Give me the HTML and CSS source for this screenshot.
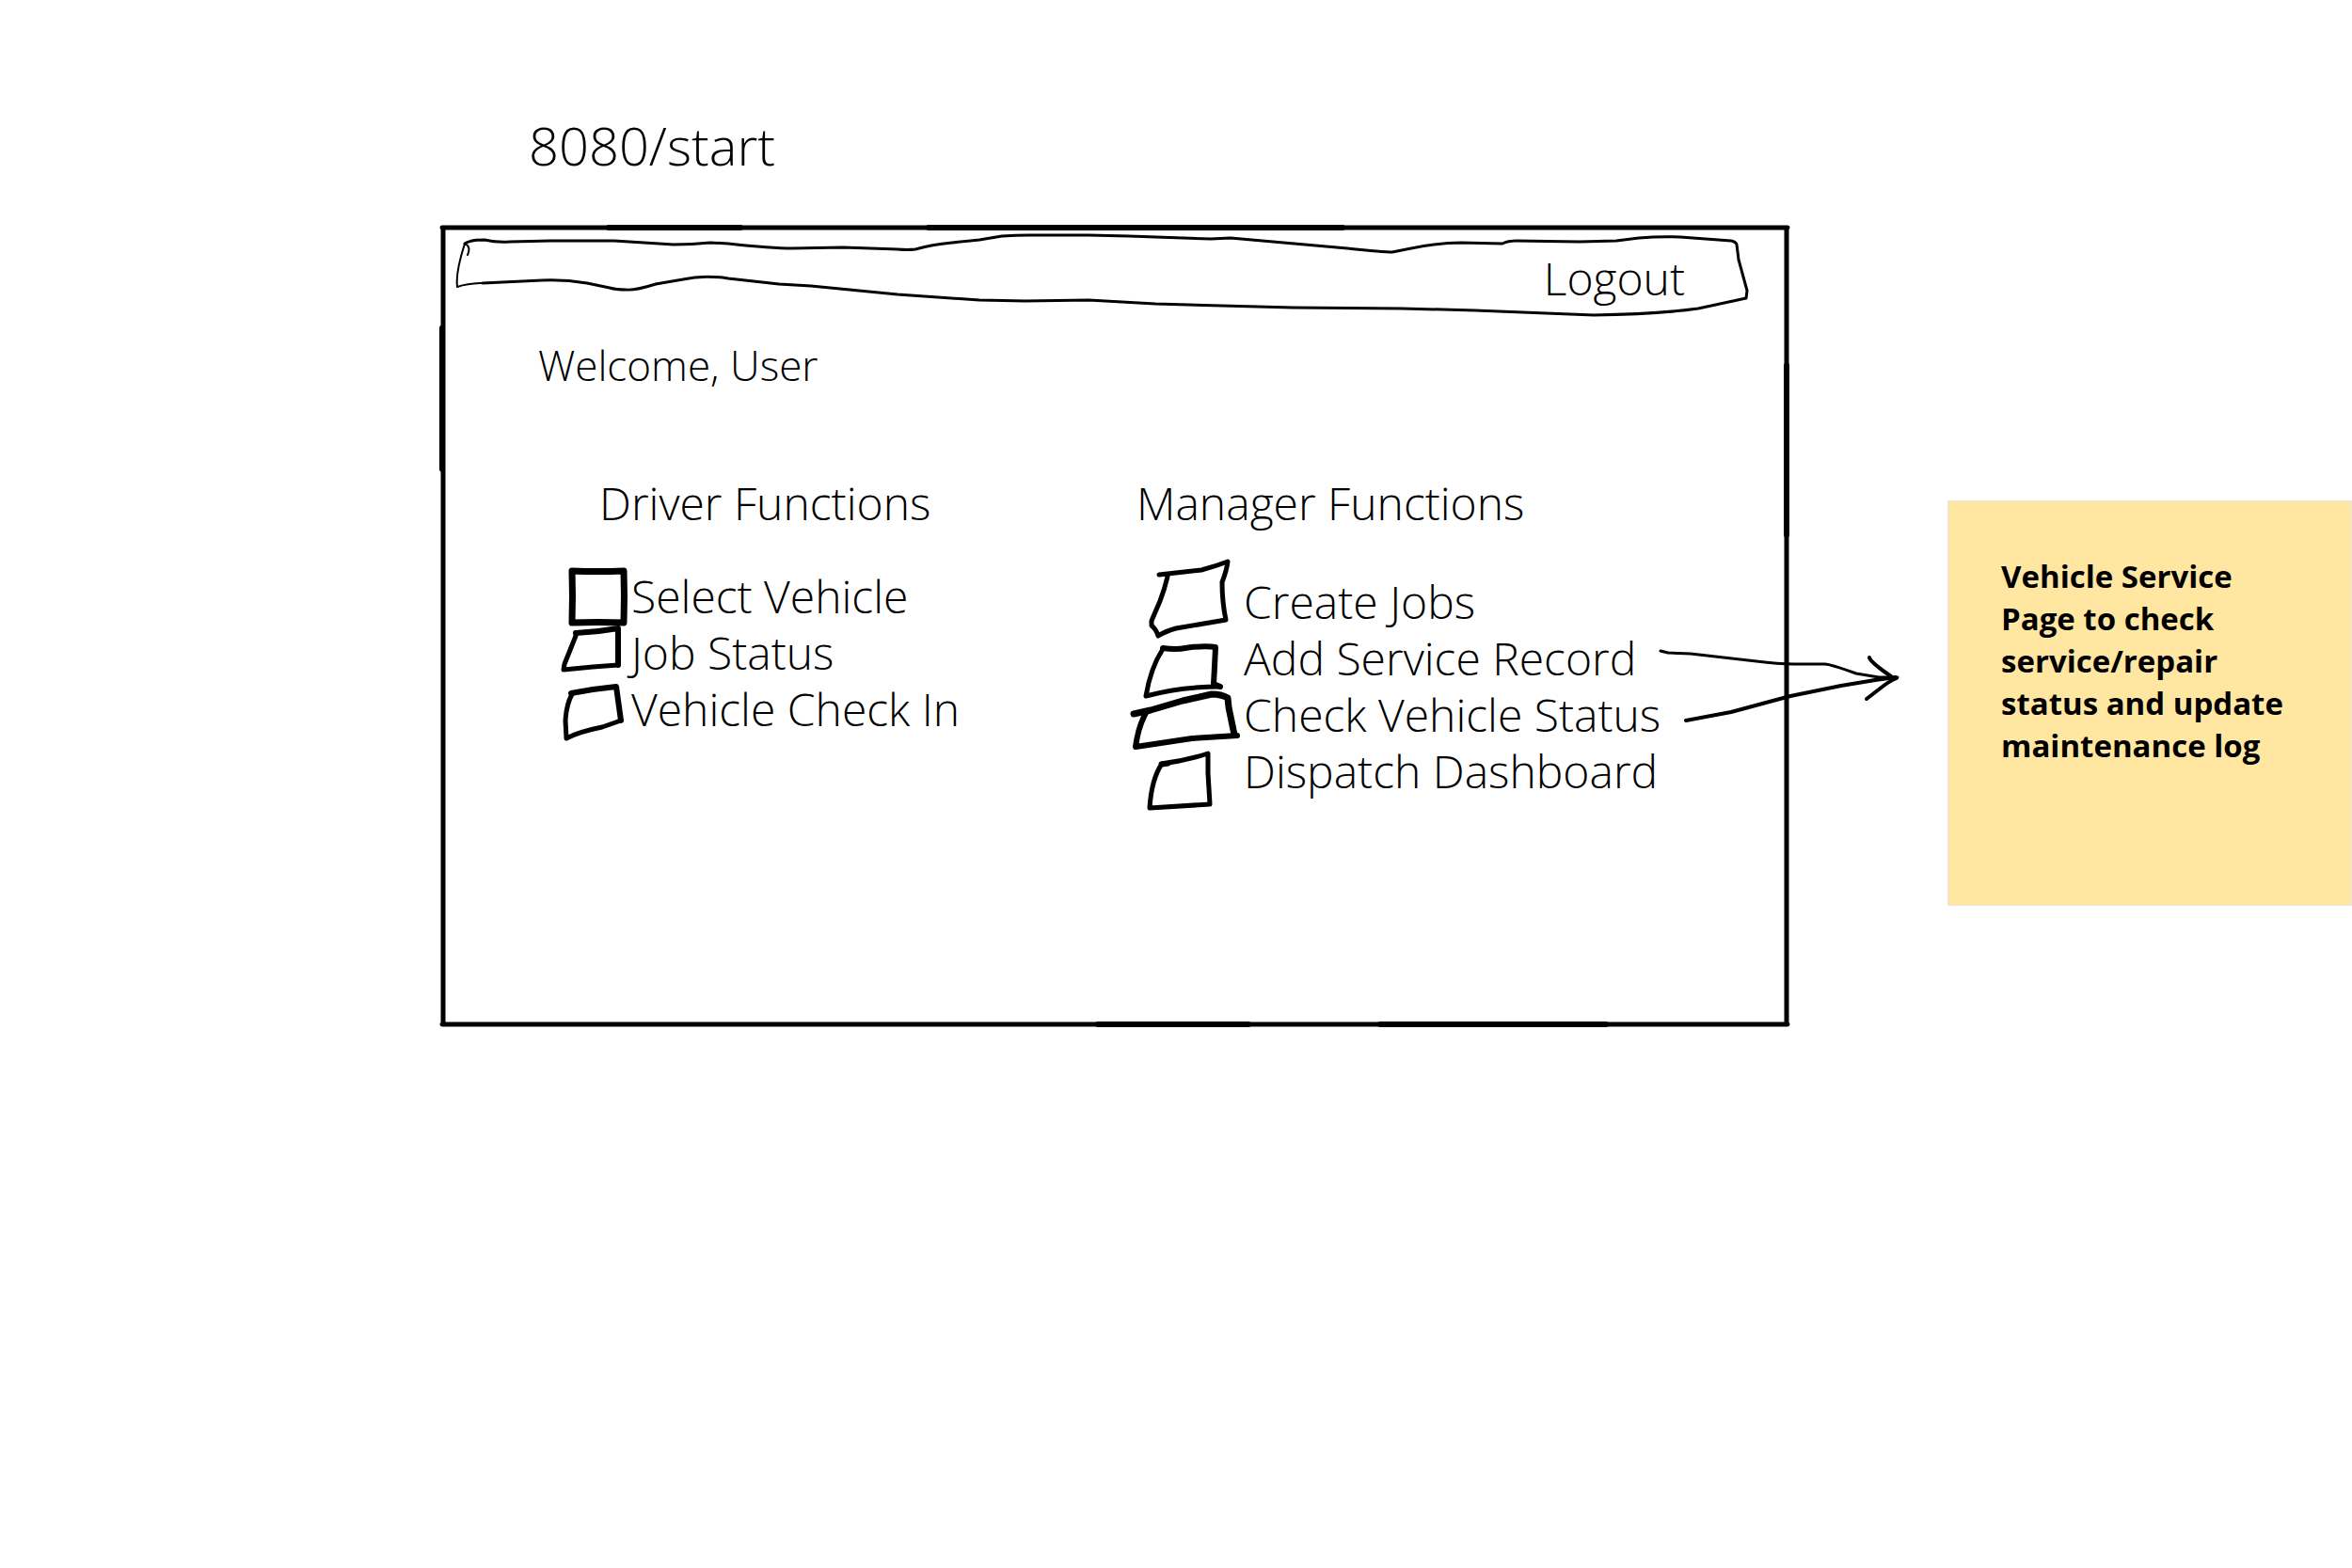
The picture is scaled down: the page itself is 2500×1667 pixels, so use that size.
FILE: index.html
```
<!DOCTYPE html>
<html lang="en">
<head>
<meta charset="utf-8">
<title>8080/start</title>
<link rel="stylesheet" href="styles.css">
</head>
<body>
<main class="board">
  <h1 class="route">8080/start</h1>

  <section class="frame">
    <svg class="frame-outline" viewBox="0 0 1436 855" preserveAspectRatio="none" aria-hidden="true">
      <path class="edge" d="M3 3H1433M4 3V851M1432 3V851M3 851H1433"/>
      <path class="swell" d="M180 3H320M520 3H960M3 110V260M1432 150V330M700 851H860M1000 851H1240"/>
    </svg>

    <header class="bar">
      <svg class="bar-outline" viewBox="467 242 1436 96" preserveAspectRatio="none" aria-hidden="true">
        <path class="ink-thin" d="M497 271Q501 262 494 259Q484 290 486 305Q498 301 513 301"/>
        <path class="ink" d="M494 259Q500 255 515 255Q528 258 542 257L585 256L653 256L716 260Q735 260 755 258L774 259Q820 264 842 264L896 263L954 265Q965 266 973 265Q990 260 1012 258L1041 255L1065 251Q1080 250 1094 250L1157 250L1200 251L1287 254L1308 253L1432 264Q1470 268 1480 268Q1490 266 1500 264Q1530 258 1553 258L1597 259Q1603 256 1611 256L1679 257L1718 256L1742 253Q1765 251 1786 252L1840 256Q1845 257 1846 260L1848 276L1857 309L1856 317L1805 328Q1762 334 1694 335L1568 330L1490 328L1374 327L1228 323L1157 319L1090 320L1041 319L954 313L862 304L828 302L774 296Q748 292 726 297L697 302Q675 309 665 308Q655 308 648 306L624 301Q600 297 576 298L513 301"/>
      </svg>
      <button class="logout" type="button">Logout</button>
    </header>

    <p class="welcome">Welcome, User</p>

    <div class="columns">
      <section class="group">
        <h2 class="group-title driver-title">Driver Functions</h2>
        <ul class="list driver-list">
          <li><label class="item">
            <span class="box"><input type="checkbox">
              <svg viewBox="0 0 72 60" aria-hidden="true"><path class="box-heavy" d="M13 3Q40 4 68 3Q69 30 68 58Q40 57 13 58Q14 30 13 3Z"/></svg></span>
            <span>Select Vehicle</span></label></li>
          <li><label class="item">
            <span class="box"><input type="checkbox">
              <svg viewBox="0 0 72 60" aria-hidden="true"><path class="box-bold" d="M17 9Q40 8 62 4V43"/><path class="box-ink" d="M62 43L35 45L4 48L5 42L17 12"/></svg></span>
            <span>Job Status</span></label></li>
          <li><label class="item">
            <span class="box"><input type="checkbox">
              <svg viewBox="0 0 72 60" aria-hidden="true"><path class="box-bold" d="M12 13L35 9L60 6L65 42"/><path class="box-ink" d="M65 42L45 49Q20 54 7 61L6 42Q7 25 13 14"/></svg></span>
            <span>Vehicle Check In</span></label></li>
        </ul>
      </section>

      <section class="group">
        <h2 class="group-title manager-title">Manager Functions</h2>
        <ul class="list manager-list">
          <li><label class="item">
            <span class="box"><input type="checkbox">
              <svg viewBox="0 0 122 60" aria-hidden="true"><path class="box-ink" d="M32 1L77 -4Q92 -8 105 -13Q104 -4 99 9Q99 30 103 49L50 58Q39 61 31 66Q29 59 24 55V50L33 29Q38 16 41 3"/></svg></span>
            <span>Create Jobs</span></label></li>
          <li><label class="item">
            <span class="box"><input type="checkbox">
              <svg viewBox="0 0 122 60" aria-hidden="true"><path class="box-bold" d="M36 19Q50 21 60 19Q80 16 92 18Q91 40 90 57L97 60"/><path class="box-ink" d="M97 60Q55 60 18 70Q23 40 36 20"/></svg></span>
            <span>Add Service Record</span></label></li>
          <li><label class="item">
            <span class="box"><input type="checkbox">
              <svg viewBox="0 0 122 60" aria-hidden="true"><path class="box-heavy" d="M5 29L23 25L57 15L88 8Q98 8 105 12L106 22L112 51"/><path class="box-bold" d="M115 52L67 55L7 64Q10 42 18 28"/></svg></span>
            <span>Check Vehicle Status</span></label></li>
          <li><label class="item">
            <span class="box"><input type="checkbox">
              <svg viewBox="0 0 122 60" aria-hidden="true"><path class="box-ink" d="M35 23L42 22M34 22Q60 19 84 11V32L86 65L22 69Q24 38 35 22"/></svg></span>
            <span>Dispatch Dashboard</span></label></li>
        </ul>
      </section>
    </div>
  </section>

  <svg class="arrows" viewBox="1760 690 260 80" aria-hidden="true">
    <path class="arrow-thin" d="M1765 692L1773 694L1797 695L1867 703Q1890 706 1907 706H1940Q1945 706 1973 716L1997 720H2017"/>
    <path class="arrow-head" d="M1792 766L1840 757L1903 740L1957 729L1993 723L2015 720"/>
    <path class="arrow-head" d="M1987 699Q1988 704 2010 719M1984 743L1997 733Q2008 724 2016 721"/>
  </svg>

  <aside class="note">
    <p>Vehicle Service Page to check service/repair status and update maintenance log</p>
  </aside>
</main>
</body>
</html>
```
FILE: styles.css
```
* {
  box-sizing: border-box;
}

body {
  margin: 0;
  background: #fff;
  color: #000;
  font-family: "Open Sans", "Noto Sans", sans-serif;
  font-size: 48px;
  font-weight: 300;
  line-height: 60px;
}

h1, h2, p, ul {
  margin: 0;
  padding: 0;
  font-size: inherit;
  font-weight: inherit;
}

ul {
  list-style: none;
}

svg {
  overflow: visible;
}

path {
  fill: none;
  stroke: #000;
  stroke-linecap: round;
  stroke-linejoin: round;
}

.board {
  position: relative;
  display: grid;
  grid-template-columns: 467fr 1436fr 167fr 430fr;
  grid-template-rows: auto auto;
  row-gap: 55px;
  align-items: start;
  min-height: 100vh;
  align-content: start;
  padding-top: 124px;
}

.route {
  grid-column: 2;
  padding-left: 95px;
  font-size: 56px;
}

.frame {
  position: relative;
  grid-column: 2;
  grid-row: 2;
  padding: 3px 0 243px;
}

.frame-outline {
  position: absolute;
  inset: 0;
  width: 100%;
  height: 100%;
  pointer-events: none;
}

.edge { stroke-width: 5; }
.swell { stroke-width: 6; }

.bar {
  position: relative;
  display: flex;
  justify-content: flex-end;
  align-items: center;
  height: 96px;
  padding: 12px 112px 0 0;
}

.bar-outline {
  position: absolute;
  inset: 0;
  width: 100%;
  height: 100%;
}

.ink { stroke-width: 3; }
.ink-thin { stroke-width: 2; }

.logout {
  position: relative;
  padding: 0;
  border: 0;
  background: none;
  color: inherit;
  font: inherit;
  cursor: pointer;
}

.welcome {
  padding: 20px 0 0 105px;
  font-size: 44px;
}

.columns {
  display: grid;
  grid-template-columns: 605fr 703fr;
  padding: 87px 0 0 128px;
}

.driver-title { padding-left: 42px; }
.manager-title { padding-left: 8px; }

.driver-list { padding-top: 39px; }
.manager-list { padding-top: 45px; }

.item {
  display: flex;
  gap: 4px;
  white-space: nowrap;
}

.box {
  position: relative;
  flex: none;
  height: 60px;
}

.driver-list .box { width: 72px; }
.manager-list .box { width: 118px; }

.box svg {
  display: block;
  height: 60px;
}

.box input {
  position: absolute;
  inset: 0;
  width: 100%;
  height: 100%;
  margin: 0;
  opacity: 0;
}

.box-ink { stroke-width: 5; }
.box-bold { stroke-width: 6; }
.box-heavy { stroke-width: 7; }

.arrows {
  position: absolute;
  top: 690px;
  left: 70.4%;
  width: 10.4%;
}

.arrow-thin { stroke-width: 3; }
.arrow-head { stroke-width: 4; }

.note {
  grid-column: 4;
  grid-row: 2;
  min-height: 431px;
  margin-top: 293px;
  padding: 57px 56px;
  border: 1px solid #e6e6e6;
  background: #ffe6a1;
  font-size: 33px;
  font-weight: 700;
  line-height: 45px;
}
```
